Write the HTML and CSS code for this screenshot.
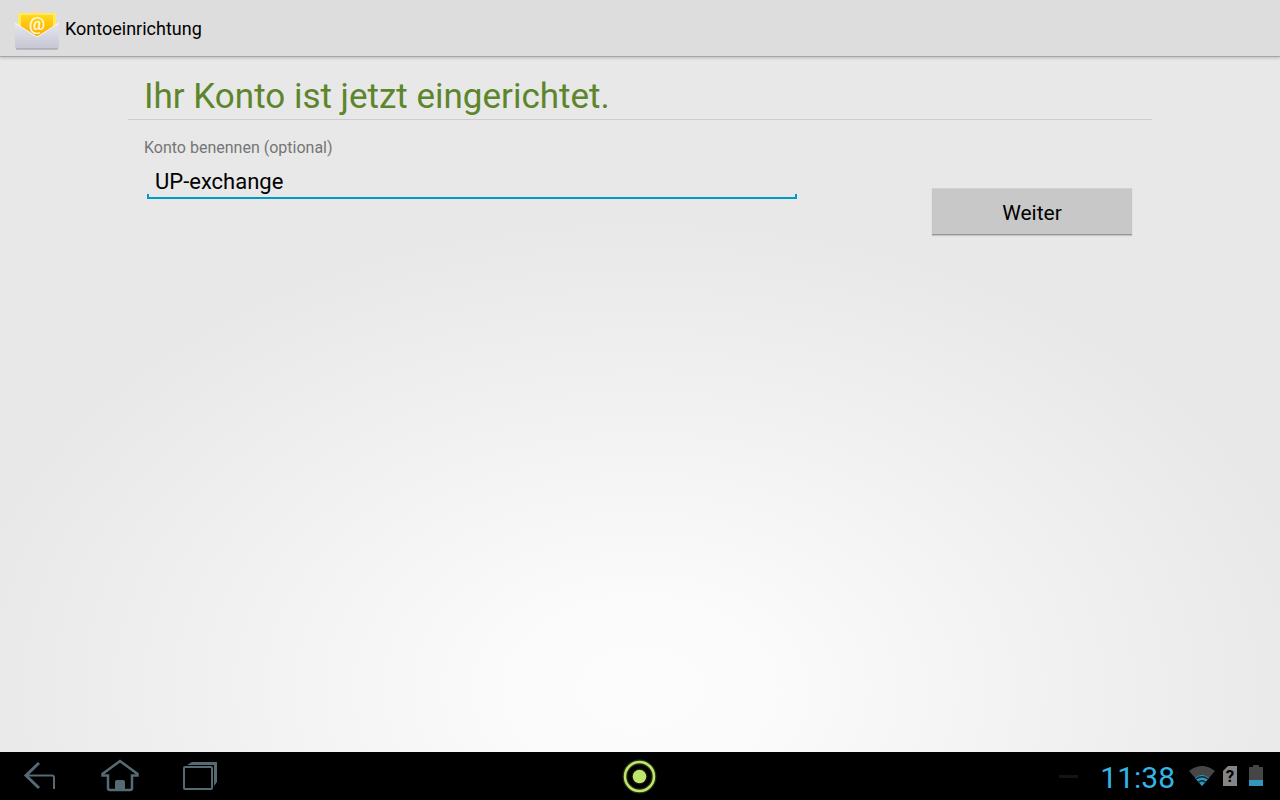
FILE: index.html
```html
<!DOCTYPE html>
<html lang="de">
<head>
    <meta charset="UTF-8">
    <meta name="viewport" content="width=device-width, initial-scale=1.0">
    <title>Kontoeinrichtung</title>
    <link rel="stylesheet" href="styles.css">
</head>
<body>

<header class="action-bar">
    <svg class="app-icon" width="46" height="44" viewBox="0 0 46 44" aria-hidden="true">
        <defs>
            <linearGradient id="paper" x1="0" y1="0" x2="0" y2="1">
                <stop offset="0" stop-color="#ffd91c"/>
                <stop offset="1" stop-color="#ffa800"/>
            </linearGradient>
            <linearGradient id="envelope" x1="0" y1="0" x2="0" y2="1">
                <stop offset="0" stop-color="#e6e6ee"/>
                <stop offset="1" stop-color="#c6c6d4"/>
            </linearGradient>
        </defs>
        <path d="M1 18 L20 2 Q23 0 26 2 L45 18 Z" fill="#ecd9d4"/>
        <path d="M4 6 H42 V30 H4 Z" fill="#ffe95c"/>
        <path d="M7 8 H39 V30 H7 Z" fill="url(#paper)"/>
        <text x="23" y="23" class="at-sign">@</text>
        <path d="M1 16 L23 30 L45 16 V40 Q45 42 43 42 H3 Q1 42 1 40 Z" fill="url(#envelope)"/>
        <path d="M1 16 L23 30 L45 16" fill="none" stroke="#f6f6fa"/>
        <path d="M2 42 H44" stroke="#9a9aa6"/>
    </svg>
    <span class="app-title">Kontoeinrichtung</span>
</header>

<main class="content">
    <h1>Ihr Konto ist jetzt eingerichtet.</h1>
    <form class="setup-form" onsubmit="return false">
        <div class="field">
            <label for="accountName">Konto benennen (optional)</label>
            <input type="text" id="accountName" value="UP-exchange" spellcheck="false">
        </div>
        <button type="submit" class="next-btn">Weiter</button>
    </form>
</main>

<footer class="system-bar">
    <nav class="nav-keys">
        <button type="button" aria-label="Zurück">
            <svg width="40" height="40" viewBox="0 0 40 40" fill="none" stroke="#566a73" stroke-width="2">
                <path d="M19 7 L6 19.500 L19 32" stroke-width="3"/>
                <path d="M6 19.500 H32 Q34 19.500 34 21.500 V33"/>
            </svg>
        </button>
        <button type="button" aria-label="Startseite">
            <svg width="40" height="40" viewBox="0 0 40 40" fill="none" stroke="#566a73" stroke-width="2.500">
                <path d="M20 5 L2.500 18 V19.500 H8 V32 Q8 34 10 34 H30 Q32 34 32 32 V19.500 H37.500 V18 Z"/>
                <path d="M15 34 V26 Q15 24 17 24 H23 Q25 24 25 26 V34 Z" fill="#566a73" stroke="none"/>
            </svg>
        </button>
        <button type="button" aria-label="Letzte Apps">
            <svg width="40" height="40" viewBox="0 0 40 40" fill="none" stroke="#566a73" stroke-width="2">
                <rect x="4" y="11" width="28" height="22" rx="1"/>
                <path d="M7 9 L12 6 H37 V26 L34 30 V9 Z" fill="#566a73" stroke="none"/>
            </svg>
        </button>
    </nav>

    <button type="button" class="ring-btn" aria-label="Ring">
        <svg width="40" height="40" viewBox="0 0 40 40">
            <circle cx="19.500" cy="20.500" r="14.500" fill="none" stroke="#273311" stroke-width="5"/>
            <circle cx="19.500" cy="20.500" r="8" fill="#141b08"/>
            <circle cx="19.500" cy="20.500" r="14.500" fill="none" stroke="#bfe56c" stroke-width="2.500"/>
            <circle cx="19.500" cy="20.500" r="6.800" fill="#bfe56c"/>
        </svg>
    </button>

    <div class="status">
        <span class="dash"></span>
        <time class="clock">11:38</time>
        <svg width="26" height="22" viewBox="0 0 26 22" aria-label="WLAN">
            <path d="M0 6 Q13 -4 26 6 L13 21 Z" fill="#464646"/>
            <path d="M6 13 Q13 7 20 13 L13 21 Z" fill="#3196bc"/>
            <path d="M7 14 Q13 9.500 19 14 M9 17.500 Q13 14 17 17.500" fill="none" stroke="#0c2630" stroke-width="1.300"/>
        </svg>
        <svg width="14" height="22" viewBox="0 0 14 22" aria-label="SIM-Karte">
            <path d="M5 1 H14 V21 H0 V6 Z" fill="#858585"/>
            <text x="7" y="17" class="sim-mark">?</text>
        </svg>
        <svg class="battery" width="14" height="22" viewBox="0 0 14 22" aria-label="Akku">
            <path d="M4 0 H10 V2 H14 V15 H0 V2 H4 Z" fill="#464646"/>
            <path d="M0 15 H14 V21 H0 Z" fill="#3196bc"/>
        </svg>
    </div>
</footer>

</body>
</html>
```
FILE: styles.css
```css
* {
    box-sizing: border-box;
}

body {
    margin: 0;
    min-height: 100vh;
    display: flex;
    flex-direction: column;
    font-family: Roboto, sans-serif;
    color: #000;
    background: #e8e8e8;
}

button {
    font-family: inherit;
    border: none;
    cursor: pointer;
}

svg {
    display: block;
}

/* Action bar */
.action-bar {
    position: relative; /* Keep the shadow above the content */
    display: flex;
    align-items: center;
    gap: 5px;
    height: 57px;
    padding: 2px 14px 0;
    background: #ddd;
    border-bottom: 1px solid #a6a6a6;
    box-shadow: 0 1px 3px rgba(0, 0, 0, 0.2);
}

.app-title {
    padding-bottom: 2px;
    font-size: 18px;
}

.at-sign {
    font-size: 18px;
    font-weight: 500;
    fill: #fffbe0;
    text-anchor: middle;
}

/* Content */
.content {
    flex: 1;
    padding: 16px 10% 0;
    background: radial-gradient(ellipse 54% 68% at 50% 91%, #fcfcfc 0%, #fbfbfb 18%, #f3f3f3 52%, #e8e8e8 100%);
}

h1 {
    margin: 0;
    padding: 2px 16px 0;
    font-size: 35px;
    line-height: 44px;
    font-weight: normal;
    color: #5d852b;
    border-bottom: 1px solid #ccc;
}

.setup-form {
    display: flex;
    justify-content: space-between;
    align-items: flex-end;
    padding: 16px 20px 0 16px;
}

.field {
    flex: 0 1 656px;
    padding-bottom: 36px;
}

label {
    display: block;
    font-size: 16px;
    line-height: 24px;
    color: #757575;
}

/* Text field: bottom line with small ticks at both ends */
input {
    display: block;
    width: calc(100% - 6px);
    height: 39px;
    margin: 0 3px;
    padding: 3px 8px 0;
    border: none;
    outline: none;
    font-family: inherit;
    font-size: 22px;
    color: #000;
    background:
        linear-gradient(#0099cc, #0099cc) left bottom / 2px 5px no-repeat,
        linear-gradient(#0099cc, #0099cc) right bottom / 2px 5px no-repeat,
        linear-gradient(#0099cc, #0099cc) left bottom / 100% 2px no-repeat;
}

.next-btn {
    width: 200px;
    height: 47px;
    padding: 2px 0 0;
    font-size: 21px;
    color: #000;
    background: #c8c8c8;
    border-top: 1px solid #d0d0d0;
    border-bottom: 1px solid #969696;
    box-shadow: 0 1px 1px rgba(0, 0, 0, 0.15);
}

/* System bar */
.system-bar {
    display: grid;
    grid-template-columns: 1fr auto 1fr;
    align-items: center;
    height: 48px;
    background: #000;
}

.system-bar button {
    padding: 0;
    background: none;
}

.nav-keys {
    display: flex;
    gap: 40px;
    padding-left: 20px;
}

.status {
    display: flex;
    align-items: center;
    justify-content: flex-end;
    padding-right: 17px;
    gap: 8px;
}

.dash {
    width: 19px;
    height: 3px;
    margin-right: 14px;
    background: #111516;
}

.clock {
    margin-right: 6px;
    padding-top: 3px;
    font-size: 30px;
    line-height: 45px;
    color: #33b5e5;
}

.sim-mark {
    font-size: 17px;
    font-weight: bold;
    fill: #000;
    text-anchor: middle;
}

.battery {
    margin-left: 4px;
}
```
